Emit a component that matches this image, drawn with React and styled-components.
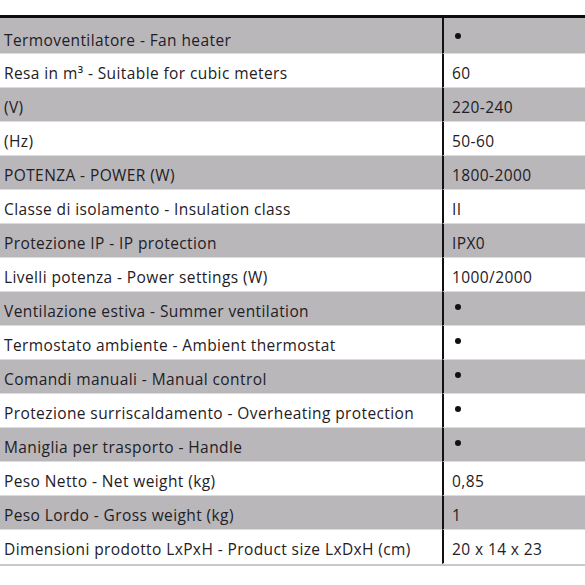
import React from "react";
import styled, { createGlobalStyle } from "styled-components";

const Global = createGlobalStyle`
  html, body { margin: 0; padding: 0; background: #ffffff; }
  body { font-family: "Open Sans", "DejaVu Sans", sans-serif; }
`;

const Page = styled.div`
  width: 585px;
  height: 585px;
  overflow: hidden;
  padding-top: 15px;
  box-sizing: border-box;
`;

const Table = styled.div`
  width: 100%;
  border-top: 3px solid #0d0d0d;
  border-bottom: 2px solid #c9c8ca;
  display: grid;
  grid-template-columns: 442px 1fr;
`;

const Cell = styled.div`
  height: ${(p) => (p.$first ? "36px" : "34px")};
  box-sizing: border-box;
  border-bottom: 1px solid ${(p) => (p.$last ? "transparent" : "#dcdcdc")};
  background: ${(p) => (p.$shade ? "#b9b7ba" : "#ffffff")};
  display: flex;
  align-items: center;
  padding-top: ${(p) => (p.$first ? "8px" : "5px")};
  font-size: 15.5px;
  letter-spacing: 0.4px;
  color: #1f2025;
  white-space: nowrap;
`;

const Label = styled(Cell)`
  padding-left: 4px;
`;

const Value = styled(Cell)`
  padding-left: 8px;
  border-left: 2px solid #111111;
`;

const Dot = styled.span`
  display: inline-block;
  width: 6px;
  height: 6px;
  border-radius: 50%;
  background: #111;
  margin-left: 3px;
  margin-top: -8px;
`;

const rows = [
  ["Termoventilatore - Fan heater", "•"],
  ["Resa in m³ - Suitable for cubic meters", "60"],
  ["(V)", "220-240"],
  ["(Hz)", "50-60"],
  ["POTENZA - POWER (W)", "1800-2000"],
  ["Classe di isolamento - Insulation class", "II"],
  ["Protezione IP - IP protection", "IPX0"],
  ["Livelli potenza - Power settings (W)", "1000/2000"],
  ["Ventilazione estiva - Summer ventilation", "•"],
  ["Termostato ambiente - Ambient thermostat", "•"],
  ["Comandi manuali - Manual control", "•"],
  ["Protezione surriscaldamento - Overheating protection", "•"],
  ["Maniglia per trasporto - Handle", "•"],
  ["Peso Netto - Net weight (kg)", "0,85"],
  ["Peso Lordo - Gross weight (kg)", "1"],
  ["Dimensioni prodotto LxPxH - Product size LxDxH (cm)", "20 x 14 x 23"],
];

export default function App() {
  return (
    <Page>
      <Global />
      <Table>
        {rows.map(([l, v], i) => {
          const props = { $shade: i % 2 === 0, $last: i === rows.length - 1, $first: i === 0 };
          return (
            <React.Fragment key={i}>
              <Label {...props}>{l}</Label>
              <Value {...props}>{v === "•" ? <Dot /> : v}</Value>
            </React.Fragment>
          );
        })}
      </Table>
    </Page>
  );
}
